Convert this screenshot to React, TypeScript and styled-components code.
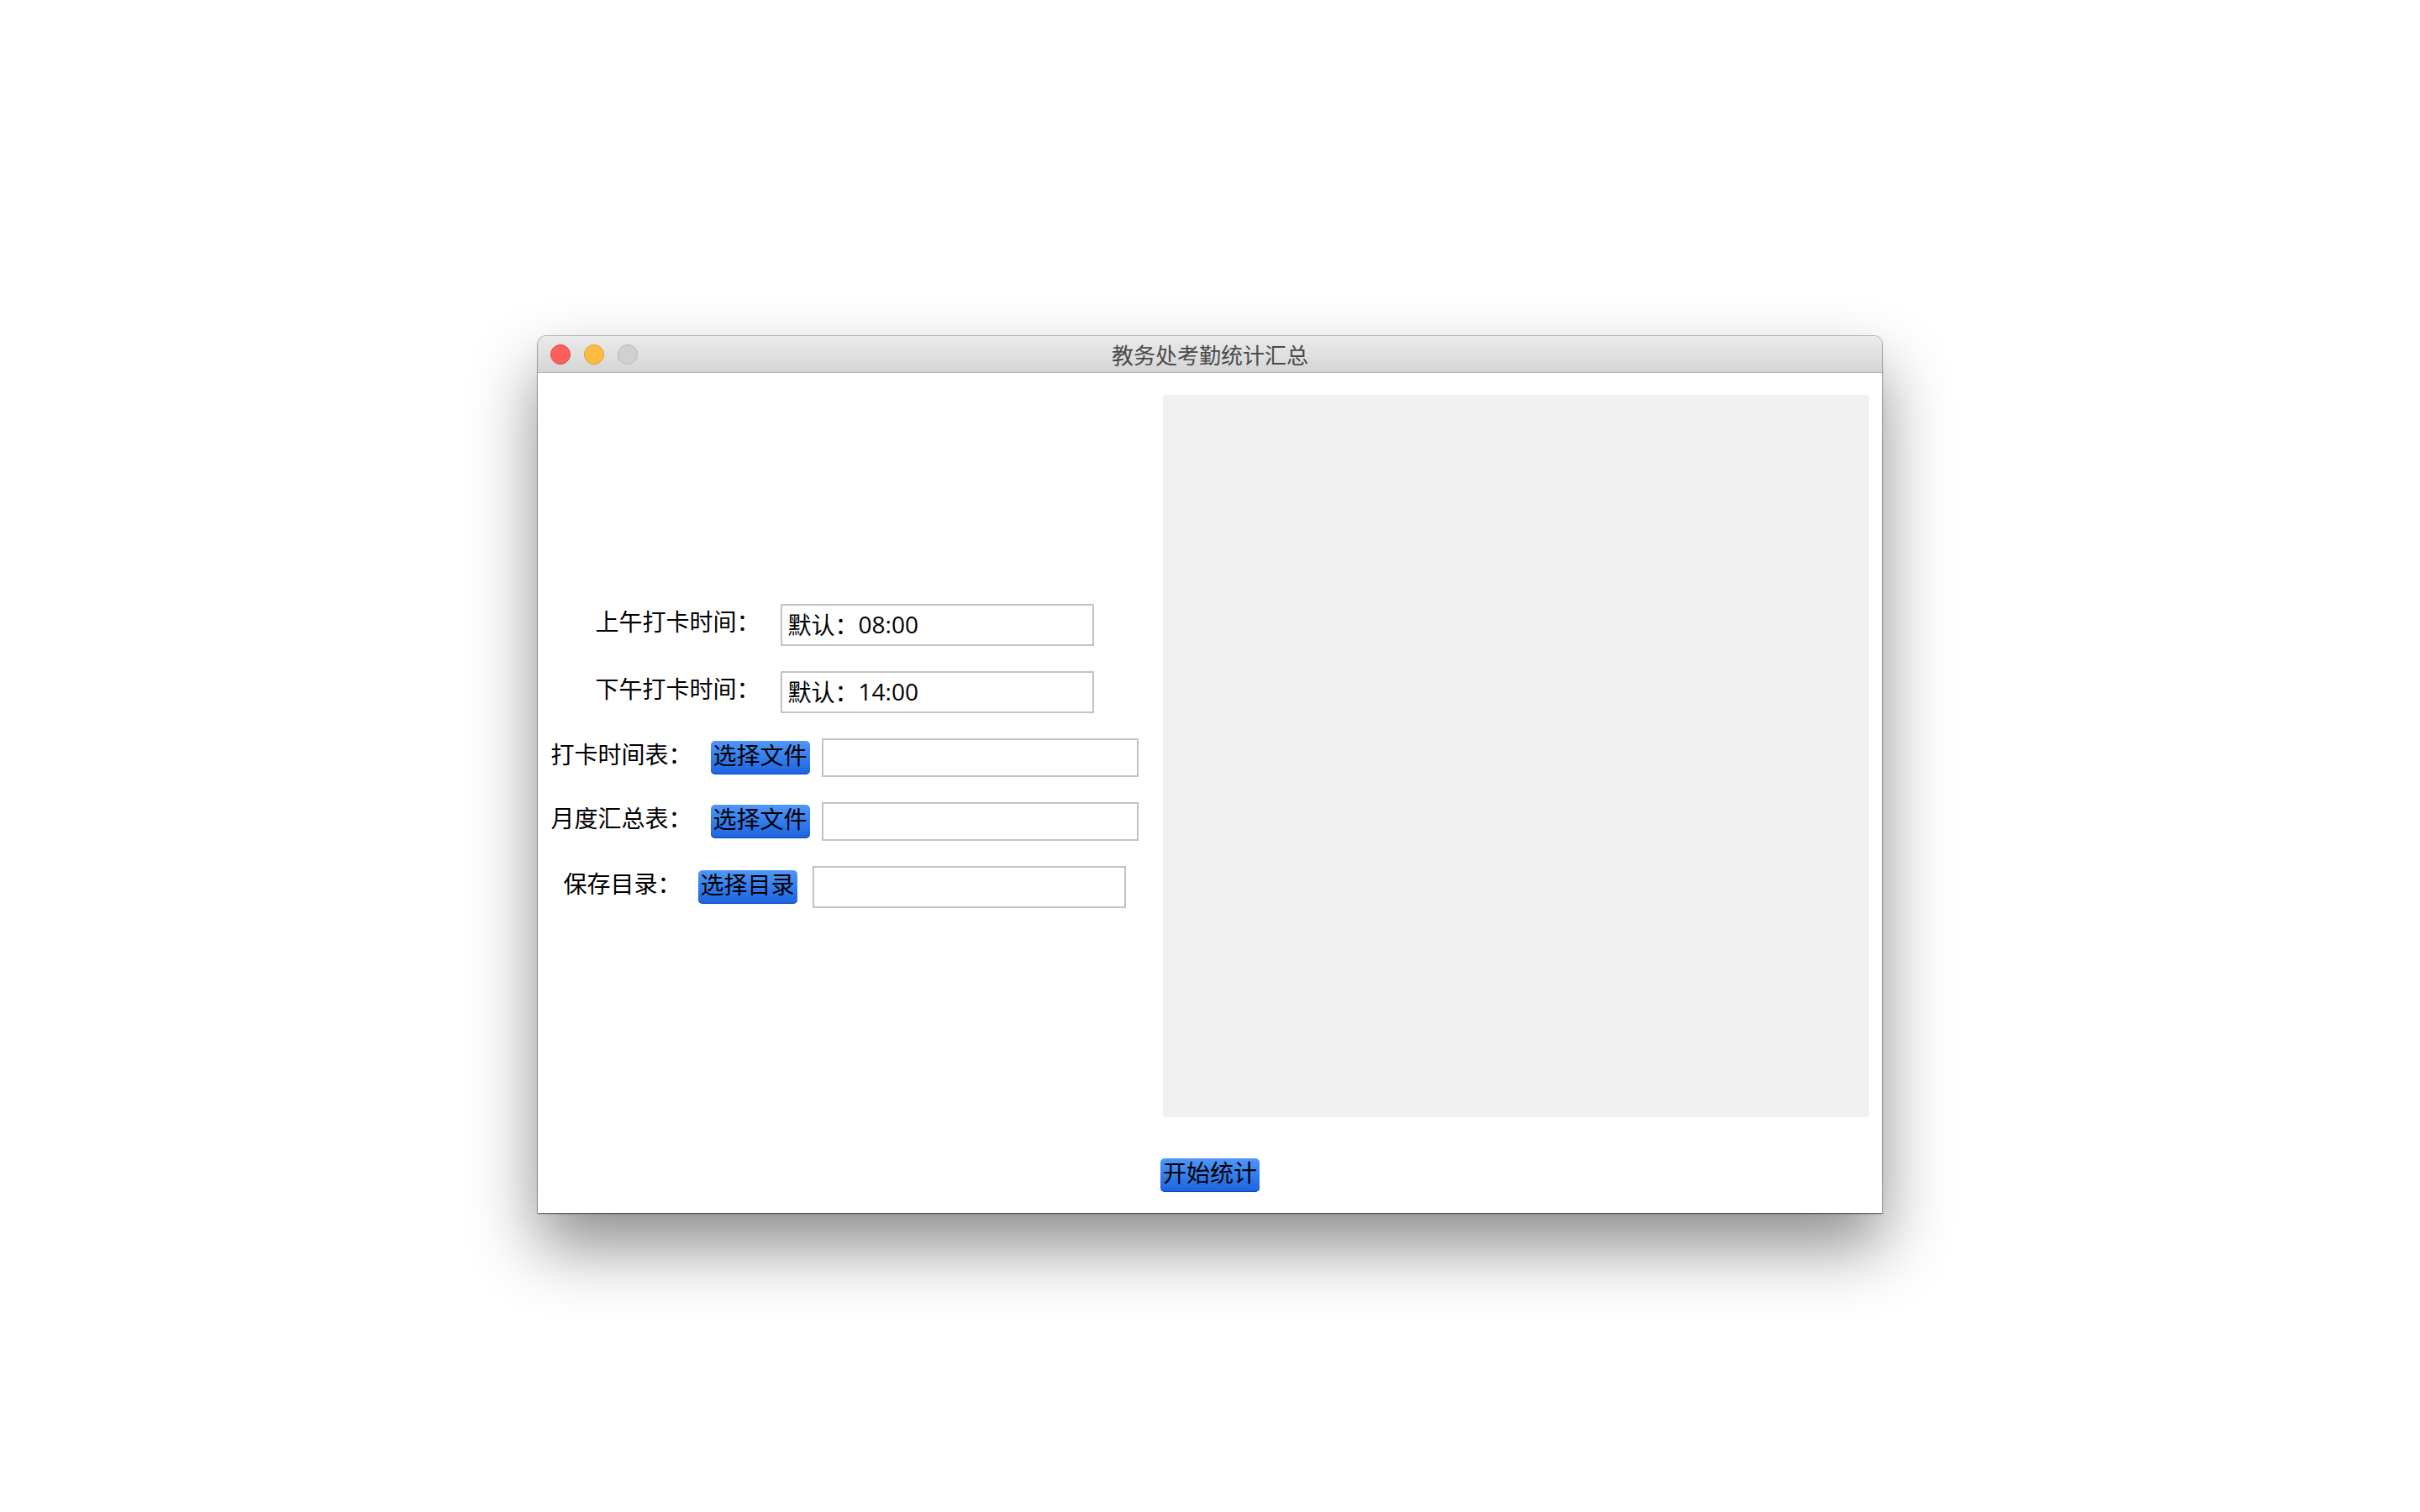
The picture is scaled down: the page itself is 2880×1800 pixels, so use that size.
import React from 'react';
import styled, { createGlobalStyle } from 'styled-components';

const FONT = `'Liberation Sans', 'Noto Sans CJK SC', sans-serif`;

const GlobalStyle = createGlobalStyle`
  html, body {
    margin: 0;
    padding: 0;
    background: #ffffff;
    font-family: ${FONT};
  }
`;

const Page = styled.div`
  width: 2880px;
  height: 1800px;
  display: flex;
  justify-content: center;
  align-items: flex-start;
  padding-top: 400px;
  box-sizing: border-box;
  overflow: hidden;
`;

const Window = styled.div`
  width: 1600px;
  display: flex;
  flex-direction: column;
  border-radius: 10px 10px 0 0;
  background: #ffffff;
  box-shadow:
    0 0 0 1px rgba(0, 0, 0, 0.22),
    0 1px 2px rgba(0, 0, 0, 0.45),
    0 40px 80px rgba(0, 0, 0, 0.45);
`;

const TitleBar = styled.div`
  position: relative;
  height: 44px;
  display: flex;
  align-items: center;
  justify-content: center;
  border-radius: 10px 10px 0 0;
  background: linear-gradient(#ebebeb, #d5d5d5);
  border-bottom: 1px solid #b4b4b4;
  box-sizing: border-box;
`;

const Lights = styled.div`
  position: absolute;
  left: 15px;
  top: 10px;
  display: flex;
  gap: 16px;
`;

const Light = styled.span<{ $fill: string; $edge: string }>`
  width: 24px;
  height: 24px;
  border-radius: 50%;
  background: ${(p) => p.$fill};
  border: 1px solid ${(p) => p.$edge};
  box-sizing: border-box;
`;

const Title = styled.div`
  font-size: 26px;
  color: #4a4a4a;
`;

const Content = styled.div`
  height: 1000px;
  display: flex;
  flex-direction: column;
  padding: 26px 16px 0 0;
  box-sizing: border-box;
`;

const Main = styled.div`
  display: flex;
  gap: 14px;
  height: 860px;
`;

const FormColumn = styled.div`
  width: 730px;
  display: flex;
  flex-direction: column;
  justify-content: center;
  align-items: center;
  gap: 30px;
`;

const Row = styled.div<{ $gap: number }>`
  display: flex;
  align-items: center;
  gap: ${(p) => p.$gap}px;
`;

const Label = styled.span<{ $space: number }>`
  font-size: 28px;
  line-height: 1;
  padding-bottom: 4px;
  color: #000;
  white-space: nowrap;
  margin-right: ${(p) => p.$space}px;
`;

const Field = styled.div<{ $w: number; $h: number }>`
  width: ${(p) => p.$w}px;
  height: ${(p) => p.$h}px;
  border: 2px solid #c3c3c3;
  box-sizing: border-box;
  display: flex;
  align-items: center;
  padding: 0 0 3px 7px;
  font-size: 28px;
  color: #000;
  background: #fff;
`;

const Digits = styled.span`
  font-family: 'Open Sans', 'Liberation Sans', sans-serif;
  font-size: 28px;
`;

const BlueButton = styled.button`
  height: 40px;
  padding: 0 3px 3px;
  border: none;
  border-radius: 5px;
  background: linear-gradient(#5097f8, #1a63df);
  box-shadow: inset 0 -1px 0 rgba(0, 40, 160, 0.5);
  font-family: ${FONT};
  font-size: 28px;
  line-height: 36px;
  color: #000;
  white-space: nowrap;
`;

const Preview = styled.div`
  width: 840px;
  height: 860px;
  background: #f1f1f1;
`;

const Footer = styled.div`
  display: flex;
  justify-content: center;
  padding: 49px 0 0 16px;
`;

export default function App() {
  return (
    <>
      <GlobalStyle />
      <Page>
        <Window>
          <TitleBar>
            <Lights>
              <Light $fill="#fc605c" $edge="#de4a45" />
              <Light $fill="#fdbc40" $edge="#dea135" />
              <Light $fill="#d0d0d0" $edge="#b8b8b8" />
            </Lights>
            <Title>教务处考勤统计汇总</Title>
          </TitleBar>
          <Content>
            <Main>
              <FormColumn>
                <Row $gap={0}>
                  <Label $space={24}>上午打卡时间：</Label>
                  <Field $w={373} $h={50}>
                    默认：<Digits>08:00</Digits>
                  </Field>
                </Row>
                <Row $gap={0}>
                  <Label $space={24}>下午打卡时间：</Label>
                  <Field $w={373} $h={50}>
                    默认：<Digits>14:00</Digits>
                  </Field>
                </Row>
                <Row $gap={14}>
                  <Label $space={8}>打卡时间表：</Label>
                  <BlueButton>选择文件</BlueButton>
                  <Field $w={377} $h={46} />
                </Row>
                <Row $gap={14}>
                  <Label $space={8}>月度汇总表：</Label>
                  <BlueButton>选择文件</BlueButton>
                  <Field $w={377} $h={46} />
                </Row>
                <Row $gap={18}>
                  <Label $space={2}>保存目录：</Label>
                  <BlueButton>选择目录</BlueButton>
                  <Field $w={373} $h={50} />
                </Row>
              </FormColumn>
              <Preview />
            </Main>
            <Footer>
              <BlueButton>开始统计</BlueButton>
            </Footer>
          </Content>
        </Window>
      </Page>
    </>
  );
}
